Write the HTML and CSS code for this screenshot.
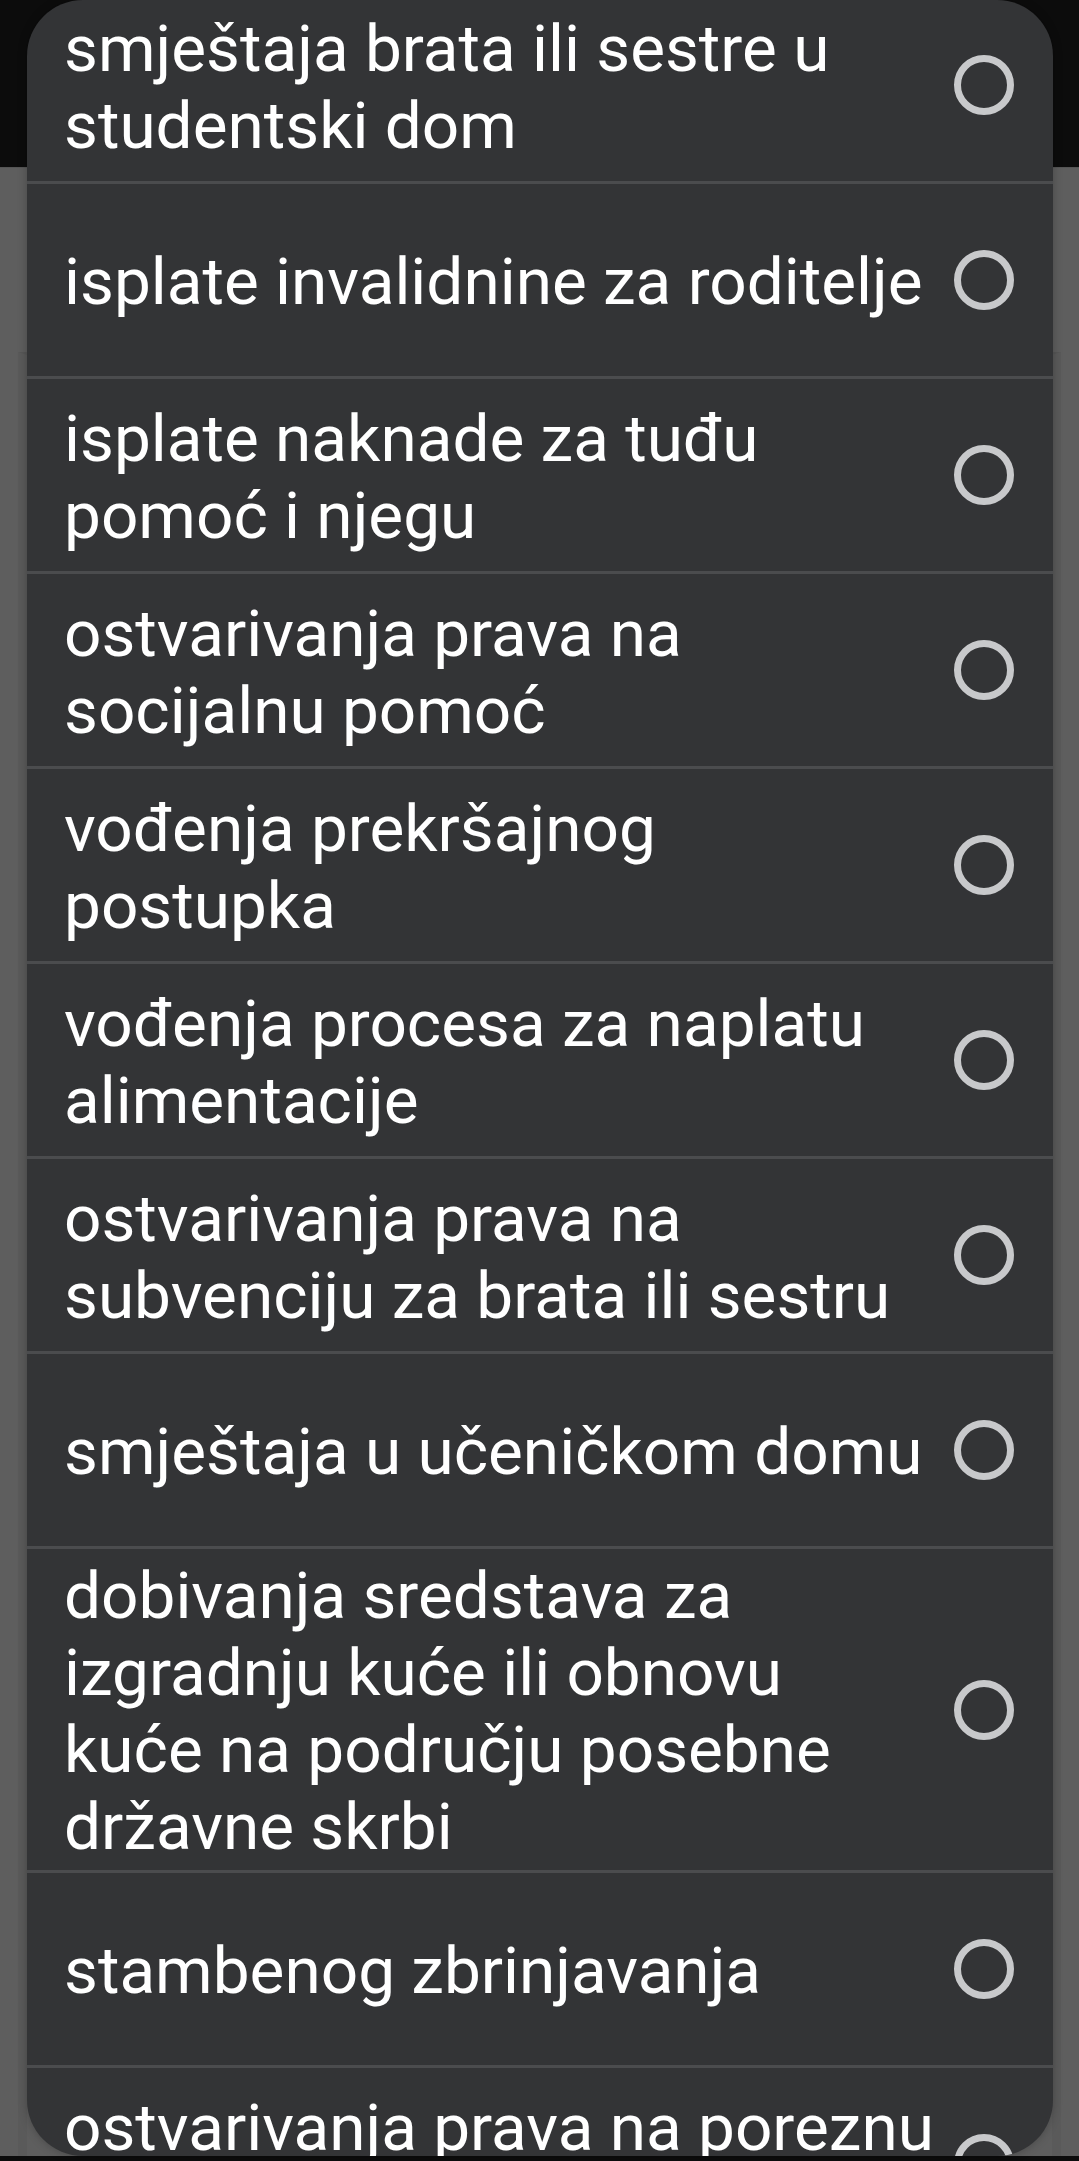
FILE: index.html
```html
<!DOCTYPE html>
<html lang="hr">

<head>
  <meta charset="UTF-8">
  <meta name="viewport" content="width=device-width, initial-scale=1.0">
  <title>Svrha</title>
  <link rel="stylesheet" href="styles.css">
</head>

<body>
  <header class="app_bar"></header>
  <main class="page">
    <div class="page_card"></div>
  </main>
  <footer class="nav_bar"></footer>

  <!-- dijalog s popisom -->
  <div class="dialog">
    <ul class="choice_list">
      <li class="choice"><span class="label">smještaja brata ili sestre u studentski dom</span><span class="radio"></span></li>
      <li class="choice"><span class="label">isplate invalidnine za roditelje</span><span class="radio"></span></li>
      <li class="choice"><span class="label">isplate naknade za tuđu pomoć i njegu</span><span class="radio"></span></li>
      <li class="choice"><span class="label">ostvarivanja prava na socijalnu pomoć</span><span class="radio"></span></li>
      <li class="choice"><span class="label">vođenja prekršajnog postupka</span><span class="radio"></span></li>
      <li class="choice"><span class="label">vođenja procesa za naplatu alimentacije</span><span class="radio"></span></li>
      <li class="choice"><span class="label">ostvarivanja prava na subvenciju za brata ili sestru</span><span class="radio"></span></li>
      <li class="choice"><span class="label">smještaja u učeničkom domu</span><span class="radio"></span></li>
      <li class="choice"><span class="label">dobivanja sredstava za izgradnju kuće ili obnovu kuće na području posebne državne skrbi</span><span class="radio"></span></li>
      <li class="choice"><span class="label">stambenog zbrinjavanja</span><span class="radio"></span></li>
      <li class="choice"><span class="label">ostvarivanja prava na poreznu olakšicu</span><span class="radio"></span></li>
    </ul>
  </div>
</body>

</html>
```

FILE: styles.css
```css
* {
  box-sizing: border-box;
  margin: 0;
  padding: 0;
}

body {
  display: flex;
  flex-direction: column;
  height: 2161px;
  overflow: hidden;
  background: #5e5e5e;
  font-family: Roboto, "Noto Sans", sans-serif;
}

.app_bar {
  height: 167px;
  background: #0c0c0c;
}

.page {
  flex: 1;
  padding: 184px 18px 0;
  border-top: 1px solid #555;
}

.page_card {
  height: 100%;
  border-top: 3px solid #565656;
  border-left: 9px solid #5a5a5a;
  border-right: 9px solid #5a5a5a;
}

.nav_bar {
  height: 5px;
  background: #0c0c0c;
}

/* dijalog */
.dialog {
  position: absolute;
  top: 0;
  left: 27px;
  width: 1026px;
  height: 2156px;
  overflow: hidden;
  border-radius: 56px;
  background: #333436;
  box-shadow: 0 0 10px rgba(0, 0, 0, 0.25);
}

.choice_list {
  list-style: none;
  margin-top: -11px;
}

.choice {
  display: flex;
  align-items: center;
  gap: 19px;
  min-height: 195px;
  padding: 5px 39px 5px 37px;
  border-bottom: 3px solid #4b4c4e;
}

.choice .label {
  flex: 1;
  padding-top: 3px;
  color: #fff;
  font-size: 65.7px;
  line-height: 77px;
}

.choice .radio {
  flex: none;
  width: 60px;
  height: 60px;
  border: 7px solid #c8c9cb;
  border-radius: 50%;
}
```
